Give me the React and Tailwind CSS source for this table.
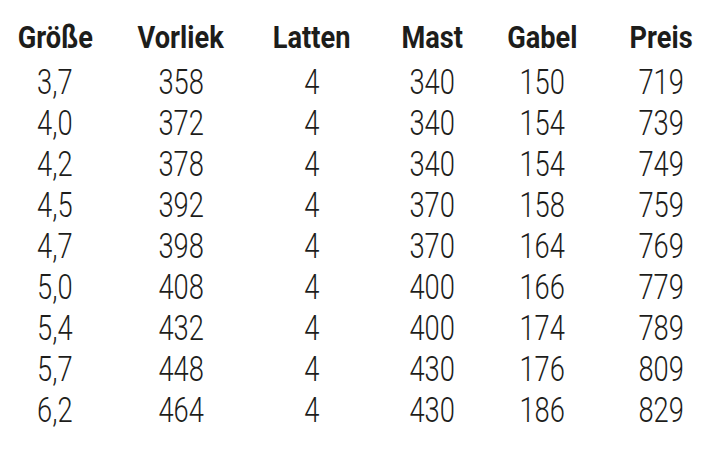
import React from 'react';

const headers = ['Größe', 'Vorliek', 'Latten', 'Mast', 'Gabel', 'Preis'];

const rows = [
  ['3,7', '358', '4', '340', '150', '719'],
  ['4,0', '372', '4', '340', '154', '739'],
  ['4,2', '378', '4', '340', '154', '749'],
  ['4,5', '392', '4', '370', '158', '759'],
  ['4,7', '398', '4', '370', '164', '769'],
  ['5,0', '408', '4', '400', '166', '779'],
  ['5,4', '432', '4', '400', '174', '789'],
  ['5,7', '448', '4', '430', '176', '809'],
  ['6,2', '464', '4', '430', '186', '829'],
];

// column widths chosen so each text centre lands where the sheet has it
const grid = 'grid grid-cols-[110px_142px_120px_120px_100px_120px]';

export default function App() {
  return (
    <div className="w-[712px] h-[451px] overflow-hidden bg-white text-[#1d1d1b] pt-[12px] font-['Roboto',sans-serif]">
      <div className={`${grid} text-[32px] leading-[50px] font-bold`}>
        {headers.map((h, i) => (
          <div key={h} className={i === 5 ? 'text-center pl-[18px]' : 'text-center'}>
            <span className="inline-block scale-x-[0.85]">{h}</span>
          </div>
        ))}
      </div>
      {rows.map((r, ri) => (
        <div key={ri} className={`${grid} text-[35px] leading-[41px] font-light`}>
          {r.map((c, i) => (
            <div key={i} className={i === 5 ? 'text-center pl-[18px]' : 'text-center'}>
              <span className="inline-block scale-x-[0.78]">{c}</span>
            </div>
          ))}
        </div>
      ))}
    </div>
  );
}
